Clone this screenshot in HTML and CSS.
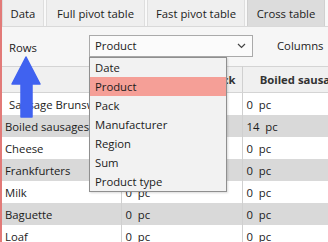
FILE: index.html
```html
<!DOCTYPE html>
<html lang="en">
<head>
    <meta charset="UTF-8">
    <meta name="viewport" content="width=device-width, initial-scale=1.0">
    <title>Cross table</title>
    <link rel="stylesheet" href="styles.css">
</head>
<body>
    <div class="window">
        <div class="tabs">
            <div class="tab tab-data">Data</div>
            <div class="tab tab-full">Full pivot table</div>
            <div class="tab tab-fast">Fast pivot table</div>
            <div class="tab tab-cross active">Cross table</div>
        </div>

        <div class="toolbar">
            <span class="label rows-label">Rows</span>
            <div class="combo">
                <span class="combo-value">Product</span>
                <svg class="chevron" width="9" height="6" viewBox="0 0 9 6">
                    <path d="M1 1 L4.5 4.5 L8 1" fill="none" stroke="#444" stroke-width="1.2"/>
                </svg>
                <ul class="dropdown">
                    <li>Date</li>
                    <li class="selected">Product</li>
                    <li>Pack</li>
                    <li>Manufacturer</li>
                    <li>Region</li>
                    <li>Sum</li>
                    <li>Product type</li>
                </ul>
            </div>
            <span class="label columns-label">Columns</span>
        </div>

        <table class="grid">
            <colgroup>
                <col class="col-name">
                <col class="col-val">
                <col class="col-last">
            </colgroup>
            <thead>
                <tr>
                    <th></th>
                    <th>Sausage Brunswick</th>
                    <th>Boiled sausages</th>
                </tr>
            </thead>
            <tbody>
                <tr class="current"><td>Sausage Brunswick</td><td>0&nbsp; pc</td><td>0&nbsp; pc</td></tr>
                <tr class="alt"><td>Boiled sausages</td><td>0&nbsp; pc</td><td>14&nbsp; pc</td></tr>
                <tr><td>Cheese</td><td>0&nbsp; pc</td><td>0&nbsp; pc</td></tr>
                <tr class="alt"><td>Frankfurters</td><td>0&nbsp; pc</td><td>0&nbsp; pc</td></tr>
                <tr><td>Milk</td><td>0&nbsp; pc</td><td>0&nbsp; pc</td></tr>
                <tr class="alt"><td>Baguette</td><td>0&nbsp; pc</td><td>0&nbsp; pc</td></tr>
                <tr><td>Loaf</td><td>0&nbsp; pc</td><td>0&nbsp; pc</td></tr>
            </tbody>
        </table>

        <svg class="arrow" width="34" height="64" viewBox="0 0 34 64">
            <path d="M16 1 L30 28 L22 28 L22 61 L11 61 L11 28 L2 28 Z" fill="#4062f0" stroke="#4062f0" stroke-width="1.5" stroke-linejoin="round"/>
        </svg>
    </div>
</body>
</html>
```

FILE: styles.css
```css
body {
    margin: 0;
    font-family: "Open Sans", "Noto Sans", sans-serif;
    font-size: 11.3px;
    color: #1b1b1b;
    background: #ffffff;
    overflow: hidden;
}

.window {
    position: relative;
    height: 242px;
    border-left: 2px solid #e27a78;
    background-color: #f6f6f6;
    overflow: hidden;
}

.tabs {
    display: flex;
    gap: 2px;
    height: 26px;
    background-color: #f9f9f9;
    border-bottom: 1px solid #d9d9d9;
}
.tab {
    display: flex;
    align-items: center;
    justify-content: center;
    box-sizing: border-box;
    border: 1px solid #dedede;
    border-top: none;
    border-bottom: none;
    background-color: #efefef;
    white-space: nowrap;
}
.tab-data { width: 42px; }
.tab-full { width: 99px; }
.tab-fast { width: 98px; }
.tab-cross { width: 78px; }
.tab.active {
    background-color: #dcdcdc;
    border-color: #d0d0d0;
}

.toolbar {
    display: flex;
    align-items: center;
    height: 39px;
}
.label {
    white-space: nowrap;
}
.rows-label {
    width: 80px;
    padding-left: 7px;
    margin-top: 2px;
}
.columns-label {
    margin-left: 24px;
    margin-top: -2px;
}

.combo {
    position: relative;
    box-sizing: border-box;
    display: flex;
    align-items: center;
    justify-content: space-between;
    width: 164px;
    height: 22px;
    margin-bottom: 2px;
    padding: 0 6px 0 5px;
    border: 1px solid #aaaaaa;
    background-color: #fbfbfb;
}
.chevron {
    margin-top: 1px;
}

.dropdown {
    position: absolute;
    top: 21px;
    left: -1px;
    box-sizing: border-box;
    width: 138px;
    margin: 0;
    padding: 0;
    list-style: none;
    border: 1px solid #8f8f8f;
    background-color: #f2f2f2;
    box-shadow: 1px 1px 2px rgba(0, 0, 0, 0.15);
    z-index: 2;
}
.dropdown li {
    height: 19px;
    line-height: 19px;
    padding-left: 5px;
}
.dropdown li.selected {
    background-color: #f59f97;
}

.grid {
    table-layout: fixed;
    width: 364px;
    border-collapse: collapse;
    border-top: 1px solid #d4d4d4;
}
.col-name { width: 119px; }
.col-val { width: 121px; }
.col-last { width: 124px; }
.grid th,
.grid td {
    white-space: nowrap;
    overflow: hidden;
    text-align: left;
    border-left: 1px solid #d0d0d0;
}
.grid th:first-child,
.grid td:first-child {
    border-left: none;
}
.grid th {
    height: 25px;
    padding: 0 5px;
    font-weight: bold;
    text-align: center;
    color: #333;
    background-color: #f0f0f0;
    border-bottom: 1px solid #d4d4d4;
}
.grid td {
    height: 22px;
    padding: 0 4px;
    background-color: #ffffff;
}
.grid td:first-child {
    padding-left: 3px;
}
.grid tr.current td:first-child {
    padding-left: 7px;
}
.grid tr.alt td {
    background-color: #d9d9d9;
}

.arrow {
    position: absolute;
    left: 8px;
    top: 56px;
}
```
